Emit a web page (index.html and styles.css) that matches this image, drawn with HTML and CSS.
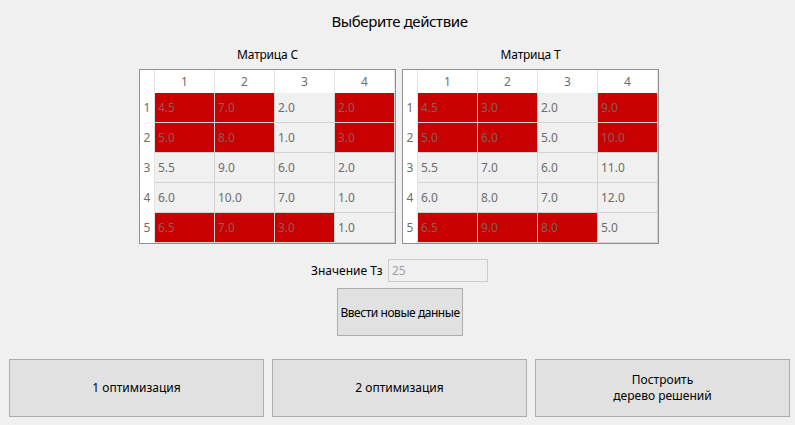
FILE: index.html
```html
<!DOCTYPE html>
<html lang="ru">
<head>
<meta charset="utf-8">
<title>Выберите действие</title>
<link rel="stylesheet" href="styles.css">
</head>
<body>
<div class="app">
  <div class="title">Выберите действие</div>
  <div class="matrices">
    <div class="matrix">
      <div class="mlabel">Матрица С</div>
      <div class="grid">
        <div class="corner"></div>
        <div class="ch">1</div><div class="ch">2</div><div class="ch">3</div><div class="ch">4</div>
        <div class="rh">1</div><div class="c r">4.5</div><div class="c r">7.0</div><div class="c">2.0</div><div class="c r">2.0</div>
        <div class="rh">2</div><div class="c r">5.0</div><div class="c r">8.0</div><div class="c">1.0</div><div class="c r">3.0</div>
        <div class="rh">3</div><div class="c">5.5</div><div class="c">9.0</div><div class="c">6.0</div><div class="c">2.0</div>
        <div class="rh">4</div><div class="c">6.0</div><div class="c">10.0</div><div class="c">7.0</div><div class="c">1.0</div>
        <div class="rh">5</div><div class="c r">6.5</div><div class="c r">7.0</div><div class="c r">3.0</div><div class="c">1.0</div>
      </div>
    </div>
    <div class="matrix">
      <div class="mlabel">Матрица Т</div>
      <div class="grid">
        <div class="corner"></div>
        <div class="ch">1</div><div class="ch">2</div><div class="ch">3</div><div class="ch">4</div>
        <div class="rh">1</div><div class="c r">4.5</div><div class="c r">3.0</div><div class="c">2.0</div><div class="c r">9.0</div>
        <div class="rh">2</div><div class="c r">5.0</div><div class="c r">6.0</div><div class="c">5.0</div><div class="c r">10.0</div>
        <div class="rh">3</div><div class="c">5.5</div><div class="c">7.0</div><div class="c">6.0</div><div class="c">11.0</div>
        <div class="rh">4</div><div class="c">6.0</div><div class="c">8.0</div><div class="c">7.0</div><div class="c">12.0</div>
        <div class="rh">5</div><div class="c r">6.5</div><div class="c r">9.0</div><div class="c r">8.0</div><div class="c">5.0</div>
      </div>
    </div>
  </div>
  <div class="tz">
    <span class="tzlabel">Значение Тз</span>
    <div class="tzinput">25</div>
  </div>
  <div class="newdata"><button class="btn btn-new">Ввести новые данные</button></div>
  <div class="actions">
    <button class="btn btn-big">1 оптимизация</button>
    <button class="btn btn-big">2 оптимизация</button>
    <button class="btn btn-big">Построить<br>дерево решений</button>
  </div>
</div>
</body>
</html>
```
FILE: styles.css
```css
* { box-sizing: border-box; }
html, body { margin: 0; padding: 0; }
body {
  width: 795px;
  height: 425px;
  background: #f0f0f0;
  font-family: "Noto Sans", "Open Sans", sans-serif;
  font-size: 12px;
  color: #000;
  overflow: hidden;
}
.app { display: flex; flex-direction: column; }
.title {
  height: 40px;
  padding-top: 10px;
  text-align: center;
  font-size: 15px;
  letter-spacing: -0.4px;
  line-height: 22px;
  padding-left: 4px;
}
.matrices {
  display: flex;
  gap: 6px;
  padding-left: 139px;
}
.matrix { display: flex; flex-direction: column; width: 257px; }
.mlabel {
  text-align: center;
  height: 29px;
  padding-top: 7px;
  line-height: 16px;
  letter-spacing: -0.2px;
}
.grid {
  display: grid;
  grid-template-columns: 15px repeat(4, 60px);
  grid-template-rows: 23px repeat(5, 30px);
  border: 1px solid #8e9096;
  background: #fff;
  color: #6d6d6d;
}
.corner, .ch, .rh { background: #fff; border-right: 1px solid #e3e3e3; }
.ch { text-align: center; line-height: 23px; }
.rh { text-align: center; line-height: 30px; }
.c {
  background: #f0f0f0;
  border-right: 1px solid #d2d2d2;
  border-bottom: 1px solid #d2d2d2;
  padding-left: 3px;
  line-height: 29px;
}
.c.r { background: #c80000; color: #8c5d5d; }
.tz {
  margin-top: 15px;
  display: flex;
  align-items: center;
  padding-left: 311px;
  height: 23px;
}
.tzlabel { width: 77px; }
.tzinput {
  width: 100px;
  height: 23px;
  border: 1px solid #cccccc;
  background: #f0f0f0;
  color: #a0a0a0;
  padding-left: 3px;
  line-height: 21px;
}
.btn {
  font-family: inherit;
  font-size: 12px;
  color: #000;
  background: #e1e1e1;
  border: 1px solid #adadad;
  padding: 0;
  margin: 0;
}
.newdata { display: flex; margin-top: 6px; padding-left: 337px; }
.btn-new { width: 126px; height: 48px; white-space: nowrap; letter-spacing: -0.45px; }
.actions {
  display: flex;
  gap: 8px;
  margin-top: 23px;
  padding-left: 9px;
}
.btn-big { width: 255px; height: 58px; line-height: 16px; }
```
